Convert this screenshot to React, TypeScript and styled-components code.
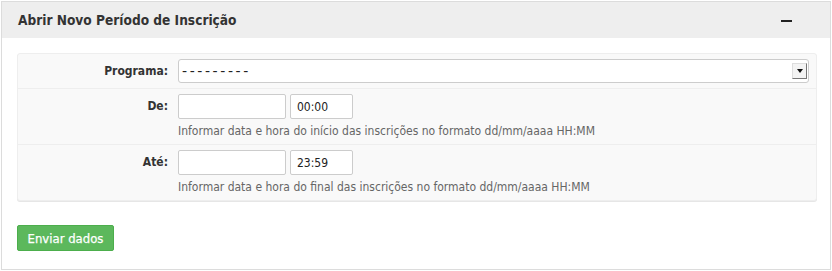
import React from 'react';
import styled, { createGlobalStyle } from 'styled-components';

const GlobalStyle = createGlobalStyle`
    html, body {
        margin: 0;
        padding: 0;
        background: #fff;
    }
    body {
        font-family: 'DejaVu Sans Condensed', 'DejaVu Sans', sans-serif;
        font-size: 12px;
        color: #333;
    }
    * {
        box-sizing: border-box;
    }
`;

const Page = styled.div`
    padding: 1px;
`;

const Panel = styled.section`
    width: 830px;
    height: 269px;
    border: 1px solid #dcdcdc;
    background: #fff;
    display: flex;
    flex-direction: column;
`;

const PanelHeader = styled.header`
    height: 36px;
    background: #eee;
    display: flex;
    align-items: center;
    justify-content: space-between;
    padding: 0 38px 0 16px;
`;

const Title = styled.h3`
    margin: 0;
    font-size: 13.6px;
    font-weight: bold;
    color: #333;
`;

const Collapse = styled.span`
    width: 11px;
    height: 2px;
    background: #222;
    display: block;
    margin-top: 1px;
`;

const PanelBody = styled.div`
    padding: 15px 13px 0 15px;
`;

const Fieldset = styled.div`
    background: #f9f9f9;
    border: 1px solid #eee;
    border-radius: 3px;
    box-shadow: 0 1px 0 #e6e6e6;
`;

const Row = styled.div<{ last?: boolean }>`
    display: grid;
    grid-template-columns: 150px 1fr;
    column-gap: 10px;
    padding: 5px 7px 5px 0;
    border-bottom: ${(props) => (props.last ? 'none' : '1px solid #eee')};
`;

const Label = styled.label`
    text-align: right;
    font-weight: bold;
    font-size: 12px;
    color: #333;
    line-height: 24px;
`;

const Field = styled.div`
    display: flex;
    flex-direction: column;
`;

const Inline = styled.div`
    display: flex;
    gap: 4px;
`;

const Input = styled.input<{ w: string }>`
    width: ${(props) => props.w};
    height: 25px;
    border: 1px solid #ccc;
    border-radius: 2px;
    background: #fff;
    font-family: inherit;
    font-size: 12px;
    color: #222;
    padding: 0 6px;
    outline: none;
`;

const SelectBox = styled.div`
    height: 24px;
    border: 1px solid #ccc;
    border-radius: 3px;
    background: #fff;
    display: flex;
    align-items: center;
    justify-content: space-between;
    padding: 0 1px 0 3px;
    color: #222;
`;

const Placeholder = styled.span`
    font-family: 'DejaVu Sans', sans-serif;
    font-size: 14px;
    letter-spacing: 2.6px;
`;

const Arrow = styled.span`
    width: 15px;
    height: 16px;
    border: 1px solid #ddd;
    border-right-color: #777;
    border-bottom-color: #777;
    background: #f3f3f3;
    display: flex;
    align-items: center;
    justify-content: center;
    &::after {
        content: '';
        border-left: 3px solid transparent;
        border-right: 3px solid transparent;
        border-top: 4px solid #111;
    }
`;

const Help = styled.p`
    margin: 5px 0 1px;
    color: #666;
    font-size: 12px;
`;

const Actions = styled.div`
    padding: 24px 0 0;
`;

const Button = styled.button`
    width: 97px;
    height: 26px;
    background: #5cb85c;
    border: 1px solid #4cae4c;
    border-radius: 2px;
    color: #fff;
    font-family: inherit;
    font-size: 13px;
    font-weight: normal;
    -webkit-text-stroke: 0.25px #fff;
    padding: 0;
    cursor: pointer;
`;

const DateRow: React.FC<{ label: string; time: string; help: string; last?: boolean }> = ({
    label,
    time,
    help,
    last,
}) => (
    <Row last={last}>
        <Label>{label}</Label>
        <Field>
            <Inline>
                <Input w="108px" defaultValue="" />
                <Input w="63px" defaultValue={time} />
            </Inline>
            <Help>{help}</Help>
        </Field>
    </Row>
);

export default function App() {
    return (
        <>
            <GlobalStyle />
            <Page>
                <Panel>
                    <PanelHeader>
                        <Title>Abrir Novo Período de Inscrição</Title>
                        <Collapse />
                    </PanelHeader>
                    <PanelBody>
                        <Fieldset>
                            <Row>
                                <Label>Programa:</Label>
                                <SelectBox>
                                    <Placeholder>---------</Placeholder>
                                    <Arrow />
                                </SelectBox>
                            </Row>
                            <DateRow
                                label="De:"
                                time="00:00"
                                help="Informar data e hora do início das inscrições no formato dd/mm/aaaa HH:MM"
                            />
                            <DateRow
                                label="Até:"
                                time="23:59"
                                help="Informar data e hora do final das inscrições no formato dd/mm/aaaa HH:MM"
                                last
                            />
                        </Fieldset>
                        <Actions>
                            <Button>Enviar dados</Button>
                        </Actions>
                    </PanelBody>
                </Panel>
            </Page>
        </>
    );
}
